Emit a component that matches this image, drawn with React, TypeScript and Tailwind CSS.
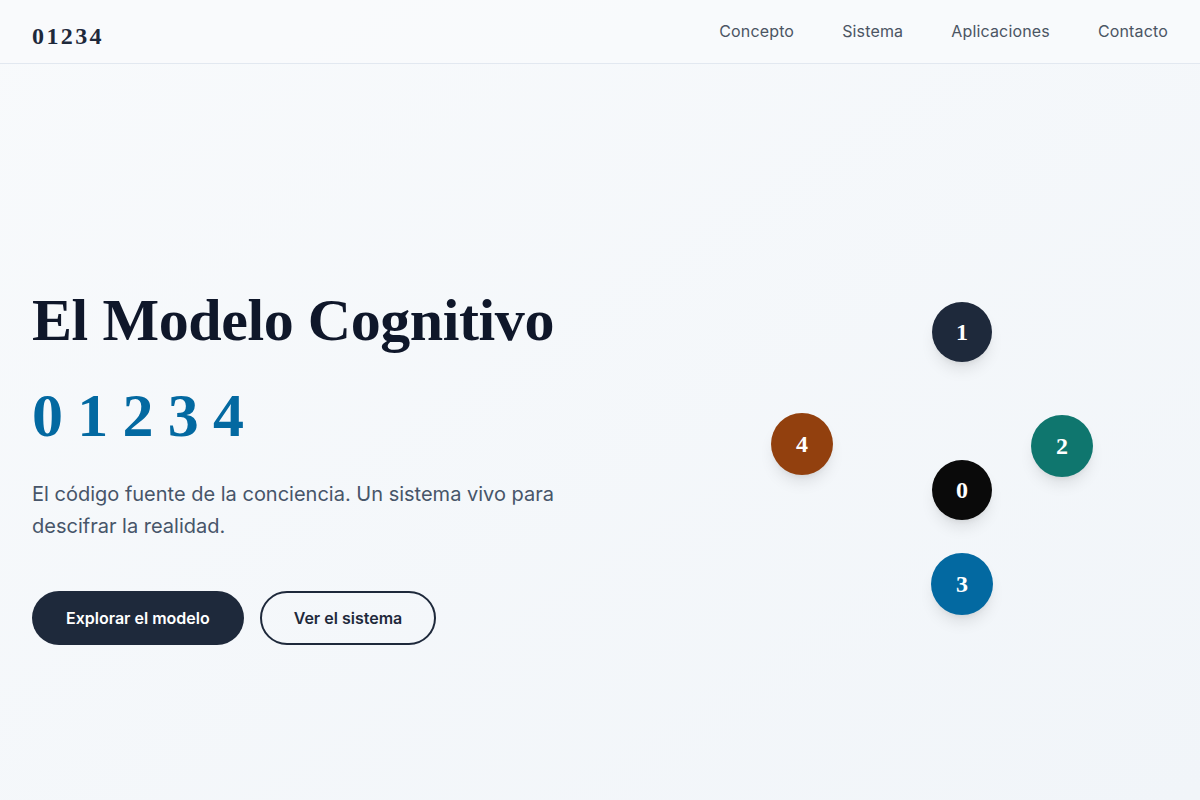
import React from "react";

const serif = "font-['Liberation_Serif','DejaVu_Serif',serif]";
const sans = "font-['Inter','Liberation_Sans',sans-serif]";

const nodes = [
  { n: "1", left: 332, top: 38, size: 60, bg: "bg-[#1e293b]" },
  { n: "4", left: 171, top: 149, size: 62, bg: "bg-[#92400e]" },
  { n: "2", left: 431, top: 151, size: 62, bg: "bg-[#0f766e]" },
  { n: "0", left: 332, top: 196, size: 60, bg: "bg-[#0a0a0a]" },
  { n: "3", left: 331, top: 289, size: 62, bg: "bg-[#0369a1]" },
];

export default function App() {
  return (
    <div className={`min-h-screen bg-gradient-to-br from-[#f8fafc] to-[#f1f5f9] ${sans}`}>
      <header className="h-16 border-b border-[#e2e8f0] bg-[#f8fafc]/90 flex items-center justify-between px-8">
        <div className={`${serif} text-2xl font-bold tracking-[0.1em] text-[#1e293b] leading-none pt-2`}>
          01234
        </div>
        <nav className="flex gap-12 text-base text-[#4b5563] tracking-[0.01em] pb-0.5">
          <a>Concepto</a>
          <a>Sistema</a>
          <a>Aplicaciones</a>
          <a>Contacto</a>
        </nav>
      </header>
      <section className="h-[736px] pt-16 flex items-center px-8">
        <div className="w-[568px] flex flex-col">
          <h1 className={`${serif} text-[60px] font-bold leading-[1.2] tracking-[-0.007em] text-[#0f172a]`}>
            El Modelo Cognitivo
          </h1>
          <div className={`${serif} mt-7 text-[62px] font-bold leading-none tracking-[0.23em] text-[#0369a1]`}>
            01234
          </div>
          <p className="mt-8 text-xl leading-8 text-[#475569] max-w-[540px]">
            El código fuente de la conciencia. Un sistema vivo para descifrar la realidad.
          </p>
          <div className="mt-12 pt-px flex gap-4">
            <button className="h-[54px] px-[34px] rounded-full bg-[#1e293b] text-white font-semibold text-base">
              Explorar el modelo
            </button>
            <button className="h-[54px] px-8 rounded-full border-2 border-[#1e293b] text-[#1e293b] font-semibold text-base">
              Ver el sistema
            </button>
          </div>
        </div>
        <div className="relative w-[568px] h-[400px]">
          {nodes.map((c) => (
            <div
              key={c.n}
              className={`absolute rounded-full ${c.bg} shadow-lg flex items-center justify-center text-white ${serif} font-bold text-2xl`}
              style={{ left: c.left, top: c.top, width: c.size, height: c.size }}
            >
              {c.n}
            </div>
          ))}
        </div>
      </section>
    </div>
  );
}
